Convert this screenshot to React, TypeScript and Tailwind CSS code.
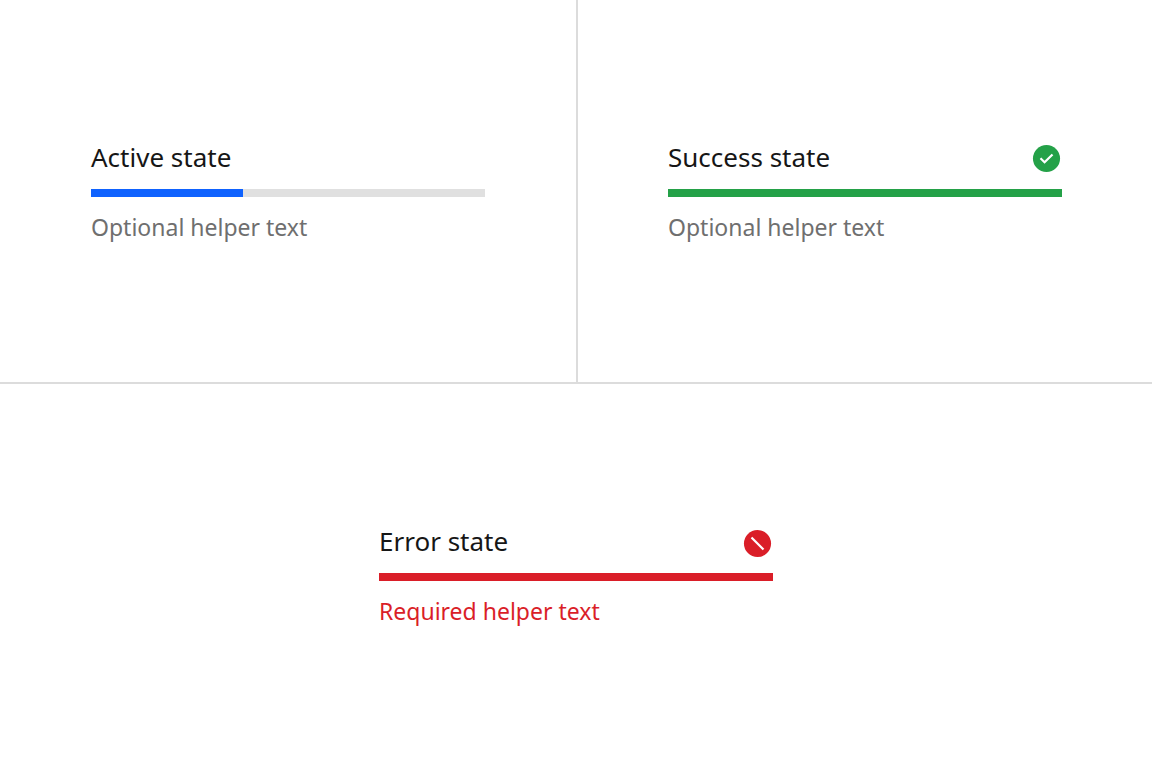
import { useId } from 'react';

type State = 'active' | 'success' | 'error';

interface ProgressBarProps {
  label: string;
  helper: string;
  value: number;
  state: State;
}

const barColors: Record<State, string> = {
  active: 'bg-[#0f62fe]',
  success: 'bg-[#24a148]',
  error: 'bg-[#da1e28]',
};

function SuccessIcon() {
  return (
    <svg viewBox="0 0 32 32" className="w-[31px] h-[31px] shrink-0" aria-hidden="true">
      <circle cx="16" cy="16" r="14" fill="#24a148" />
      <path d="M14 21.5 9 16.54 10.59 15 14 18.35 21.41 11 23 12.58z" fill="#fff" />
    </svg>
  );
}

function ErrorIcon() {
  return (
    <svg viewBox="0 0 32 32" className="w-[31px] h-[31px] shrink-0" aria-hidden="true">
      <circle cx="16" cy="16" r="14" fill="#da1e28" />
      <path d="M21.4 23 9 10.6 10.6 9 23 21.4z" fill="#fff" />
    </svg>
  );
}

function ProgressBar({ label, helper, value, state }: ProgressBarProps) {
  const id = useId();

  return (
    <div className="w-[394px] max-w-full">
      <div className="flex items-center justify-between h-9">
        <span id={`${id}-label`} className="self-start text-[26px] leading-8 text-[#161616]">{label}</span>
        {state === 'success' && <SuccessIcon />}
        {state === 'error' && <ErrorIcon />}
      </div>
      <div
        role="progressbar"
        aria-labelledby={`${id}-label`}
        aria-describedby={`${id}-helper`}
        aria-valuemin={0}
        aria-valuemax={100}
        aria-valuenow={value}
        className="mt-3 h-2 bg-[#e0e0e0]"
      >
        <div className={`h-full ${barColors[state]}`} style={{ width: `${value}%` }} />
      </div>
      <p
        id={`${id}-helper`}
        className={`mt-4 text-[23px] leading-7 ${state === 'error' ? 'text-[#da1e28]' : 'text-[#6f6f6f]'}`}
      >
        {helper}
      </p>
    </div>
  );
}

export default function App() {
  return (
    <main className="min-h-screen grid grid-rows-2 bg-white font-['Noto_Sans',sans-serif]">
      <div className="grid grid-cols-2 border-b-2 border-[#dcdcdc]">
        <section className="flex items-center justify-center">
          <ProgressBar label="Active state" helper="Optional helper text" value={38.5} state="active" />
        </section>
        <section className="flex items-center justify-center border-l-2 border-[#dcdcdc]">
          <ProgressBar label="Success state" helper="Optional helper text" value={100} state="success" />
        </section>
      </div>
      <section className="flex items-center justify-center">
        <ProgressBar label="Error state" helper="Required helper text" value={100} state="error" />
      </section>
    </main>
  );
}
